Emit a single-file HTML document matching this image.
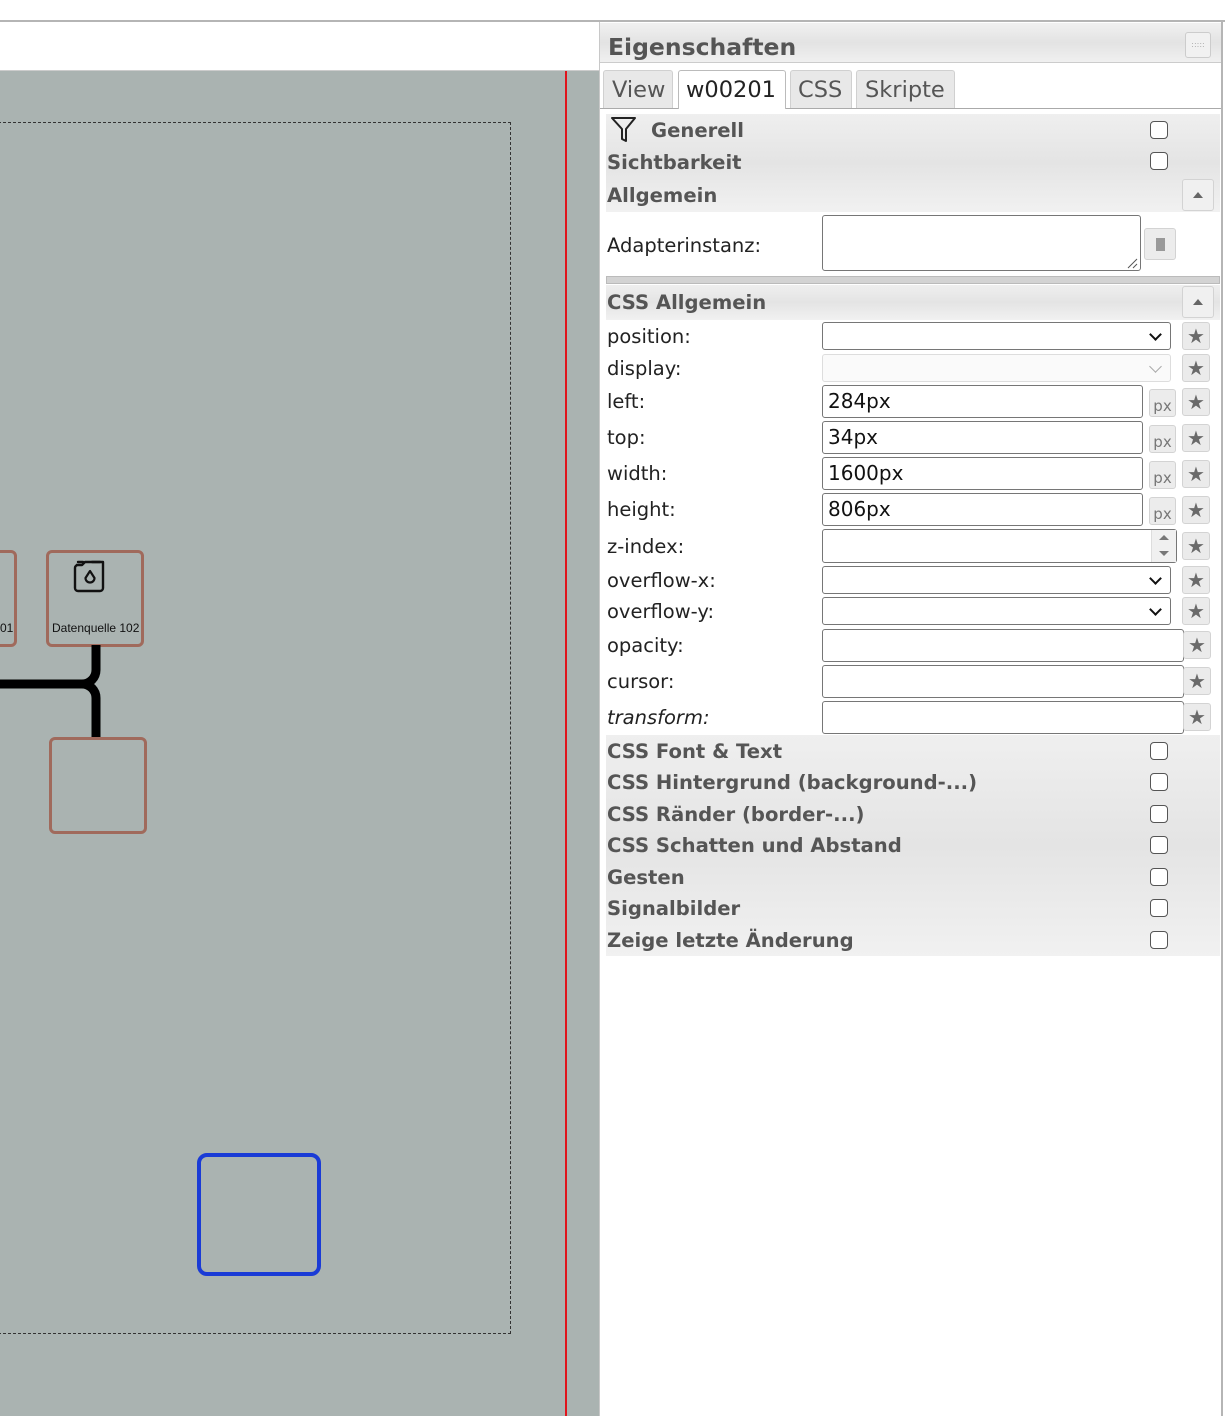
<!DOCTYPE html>
<html><head><meta charset="utf-8"><style>
*{box-sizing:border-box;margin:0;padding:0}
body{width:1225px;height:1416px;position:relative;overflow:hidden;background:#fff;font-family:"DejaVu Sans",Verdana,sans-serif;color:#222}
.a{position:absolute}
.bar{position:absolute;left:606px;width:614px;background:linear-gradient(#efefef,#e4e4e4 50%,#f1f1f1)}
.t{position:absolute;left:607px;font-weight:bold;font-size:19.6px;color:#555;line-height:24px;margin-top:1px}
.lb{position:absolute;left:607px;font-size:19.5px;color:#222;line-height:24px;margin-top:1px}
.cb{position:absolute;left:1150px;width:18px;height:18px;border:1.5px solid #555;border-radius:4px;background:#fff}
.in{position:absolute;left:822px;border:1px solid #767676;border-radius:3px;background:#fff;font-size:20px;padding-left:5px;color:#111}
.star{position:absolute;left:1182px;width:28px;height:28px;border:1px solid #d3d3d3;border-radius:3px;background:#ebebeb;color:#6a6a6a;font-size:20px;text-align:center;line-height:26px}
.px{position:absolute;left:1149px;width:27px;height:28px;border:1px solid #d3d3d3;border-radius:3px;background:#ececec;color:#777;font-size:15px;text-align:center;line-height:32px}
.up{position:absolute;left:1182px;width:32px;height:32px;border:1px solid #d3d3d3;border-radius:3px;background:#f0f0f0}
.up:after{content:"";position:absolute;left:10px;top:12px;border-left:5px solid transparent;border-right:5px solid transparent;border-bottom:6px solid #666}
.chev{position:absolute;right:10px;top:7px;width:9px;height:9px;border-right:2px solid #111;border-bottom:2px solid #111;transform:rotate(45deg)}
.tab{position:absolute;top:70px;height:38px;background:#e8e8e8;border:1px solid #d0d0d0;border-bottom:none;border-radius:3px 3px 0 0;font-size:22.5px;color:#555;padding:6px 0 0 8px}
</style></head><body>
<div class="a" style="left:0;top:0;width:1225px;height:22px;background:#fff;border-bottom:2px solid #b5b5b5"></div>
<div class="a" style="left:0;top:71px;width:600px;height:1345px;background:#aab3b1"></div>
<div class="a" style="left:0;top:70px;width:600px;height:1px;background:#ccc"></div>
<div class="a" style="left:-2px;top:122px;width:513px;height:1212px;border:1px dashed #333"></div>
<div class="a" style="left:565px;top:71px;width:2px;height:1345px;background:#e0141c"></div>
<div class="a" style="left:-20px;top:550px;width:37px;height:97px;border:3px solid #a06a5c;border-radius:6px"></div>
<div class="a" style="left:0;top:621px;font-family:'Liberation Sans',sans-serif;font-size:12px;color:#111">01</div>
<div class="a" style="left:46px;top:550px;width:98px;height:97px;border:3px solid #a06a5c;border-radius:6px"></div>
<div class="a" style="left:52px;top:621px;font-family:'Liberation Sans',sans-serif;font-size:12px;color:#111">Datenquelle 102</div>
<svg class="a" style="left:70px;top:555px" width="40" height="42" viewBox="0 0 40 42"><path d="M6 10h6l3-3h18v26a3 3 0 0 1-3 3H8a3 3 0 0 1-3-3V13a3 3 0 0 1 3-3" fill="none" stroke="#111" stroke-width="2.4" stroke-linejoin="round"/><path d="M8 7h5M22 7h8" stroke="#111" stroke-width="2.4" stroke-linecap="round"/><path d="M20 16l-4.5 7a4.5 4.5 0 1 0 9 0z" fill="none" stroke="#111" stroke-width="2.2" stroke-linejoin="round"/></svg>
<svg class="a" style="left:0;top:645px" width="110" height="95"><path d="M0 39H82a14 14 0 0 0 14-14V0M82 39a14 14 0 0 1 14 14V95" fill="none" stroke="#000" stroke-width="9"/></svg>
<div class="a" style="left:49px;top:737px;width:98px;height:97px;border:3px solid #a06a5c;border-radius:6px"></div>
<div class="a" style="left:197px;top:1153px;width:124px;height:123px;border:4px solid #1a3bd6;border-radius:10px"></div>
<div class="a" style="left:599px;top:22px;width:1px;height:1394px;background:#c8c8c8"></div>
<div class="a" style="left:1221px;top:22px;width:2px;height:1394px;background:#b5b5b5"></div>
<div class="a" style="left:600px;top:23px;width:621px;height:40px;background:linear-gradient(#f1f1f1,#e3e3e3 50%,#f0f0f0);border-bottom:1px solid #ccc"></div>
<div class="a" style="left:608px;top:33px;font-weight:bold;font-size:23.5px;color:#555">Eigenschaften</div>
<div class="a" style="left:1185px;top:32px;width:26px;height:26px;border:1px solid #ccc;border-radius:3px;background:#f1f1f1;color:#aaa;font-size:8px;text-align:center;line-height:24px">:::::</div>
<div class="a" style="left:600px;top:108px;width:621px;height:1px;background:#aaa"></div>
<div class="tab" style="left:603px;width:70px">View</div>
<div class="tab" style="left:678px;width:108px;height:39px;background:#fff;border-color:#bbb;color:#222;padding-left:7px">w00201</div>
<div class="tab" style="left:790px;width:62px;padding-left:7px">CSS</div>
<div class="tab" style="left:856px;width:99px">Skripte</div>

<div class="bar" style="top:114px;height:98px"></div>
<svg class="a" style="left:610px;top:116px" width="28" height="28" viewBox="0 0 28 28"><path d="M2 2h23l-9 11v12l-4-2V13z" fill="none" stroke="#222" stroke-width="2" stroke-linejoin="round"/></svg>
<div class="t" style="left:651px;top:118px">Generell</div><div class="cb" style="top:121px"></div>
<div class="t" style="top:150px">Sichtbarkeit</div><div class="cb" style="top:152px"></div>
<div class="t" style="top:183px">Allgemein</div><div class="up" style="top:179px"></div>
<div class="lb" style="top:233px">Adapterinstanz:</div>
<div class="in" style="top:215px;width:319px;height:56px"></div>
<svg class="a" style="left:1126px;top:257px" width="12" height="12"><path d="M11 2L2 11M11 7L7 11" stroke="#555" stroke-width="1"/></svg>
<div class="a" style="left:1144px;top:228px;width:32px;height:32px;border:1px solid #d3d3d3;border-radius:3px;background:#ececec"><div style="position:absolute;left:11px;top:9px;width:9px;height:13px;background:#999"></div></div>
<div class="a" style="left:606px;top:276px;width:614px;height:8px;background:#d3d3d3;border:1px solid #bbb"></div>
<div class="bar" style="top:285px;height:35px"></div>
<div class="t" style="top:290px">CSS Allgemein</div><div class="up" style="top:286px"></div>

<div class="lb" style="top:324px">position:</div><div class="in" style="top:322px;width:349px;height:28px"><div class="chev"></div></div><div class="star" style="top:322px">★</div>
<div class="lb" style="top:356px">display:</div><div class="in" style="top:354px;width:349px;height:28px;border-color:#ddd;background:#fafafa"><div class="chev" style="border-color:#aaa;border-width:0 1.5px 1.5px 0"></div></div><div class="star" style="top:354px">★</div>
<div class="lb" style="top:389px">left:</div><div class="in" style="top:385px;width:321px;height:33px;line-height:31px">284px</div><div class="px" style="top:389px">px</div><div class="star" style="top:388px">★</div>
<div class="lb" style="top:425px">top:</div><div class="in" style="top:421px;width:321px;height:33px;line-height:31px">34px</div><div class="px" style="top:425px">px</div><div class="star" style="top:424px">★</div>
<div class="lb" style="top:461px">width:</div><div class="in" style="top:457px;width:321px;height:33px;line-height:31px">1600px</div><div class="px" style="top:461px">px</div><div class="star" style="top:460px">★</div>
<div class="lb" style="top:497px">height:</div><div class="in" style="top:493px;width:321px;height:33px;line-height:31px">806px</div><div class="px" style="top:497px">px</div><div class="star" style="top:496px">★</div>
<div class="lb" style="top:534px">z-index:</div><div class="in" style="top:529px;width:355px;height:34px"><div style="position:absolute;right:0;top:0;width:25px;height:32px;background:#f0f0f0;border-left:1px solid #ddd"><div style="position:absolute;left:7px;top:5px;border:5px solid transparent;border-top:none;border-bottom:5px solid #777"></div><div style="position:absolute;left:7px;top:21px;border:5px solid transparent;border-bottom:none;border-top:5px solid #777"></div></div></div><div class="star" style="top:532px">★</div>
<div class="lb" style="top:568px">overflow-x:</div><div class="in" style="top:566px;width:349px;height:28px"><div class="chev"></div></div><div class="star" style="top:566px">★</div>
<div class="lb" style="top:599px">overflow-y:</div><div class="in" style="top:597px;width:349px;height:28px"><div class="chev"></div></div><div class="star" style="top:597px">★</div>
<div class="lb" style="top:633px">opacity:</div><div class="in" style="top:629px;width:362px;height:33px"></div><div class="star" style="left:1183px;top:631px">★</div>
<div class="lb" style="top:669px">cursor:</div><div class="in" style="top:665px;width:362px;height:33px"></div><div class="star" style="left:1183px;top:667px">★</div>
<div class="lb" style="top:705px;font-style:italic">transform:</div><div class="in" style="top:701px;width:362px;height:33px"></div><div class="star" style="left:1183px;top:703px">★</div>

<div class="bar" style="top:735px;height:221px"></div>
<div class="t" style="top:739px">CSS Font &amp; Text</div><div class="cb" style="top:742px"></div>
<div class="t" style="top:770px">CSS Hintergrund (background-...)</div><div class="cb" style="top:773px"></div>
<div class="t" style="top:802px">CSS Ränder (border-...)</div><div class="cb" style="top:805px"></div>
<div class="t" style="top:833px">CSS Schatten und Abstand</div><div class="cb" style="top:836px"></div>
<div class="t" style="top:865px">Gesten</div><div class="cb" style="top:868px"></div>
<div class="t" style="top:896px">Signalbilder</div><div class="cb" style="top:899px"></div>
<div class="t" style="top:928px">Zeige letzte Änderung</div><div class="cb" style="top:931px"></div>
</body></html>
